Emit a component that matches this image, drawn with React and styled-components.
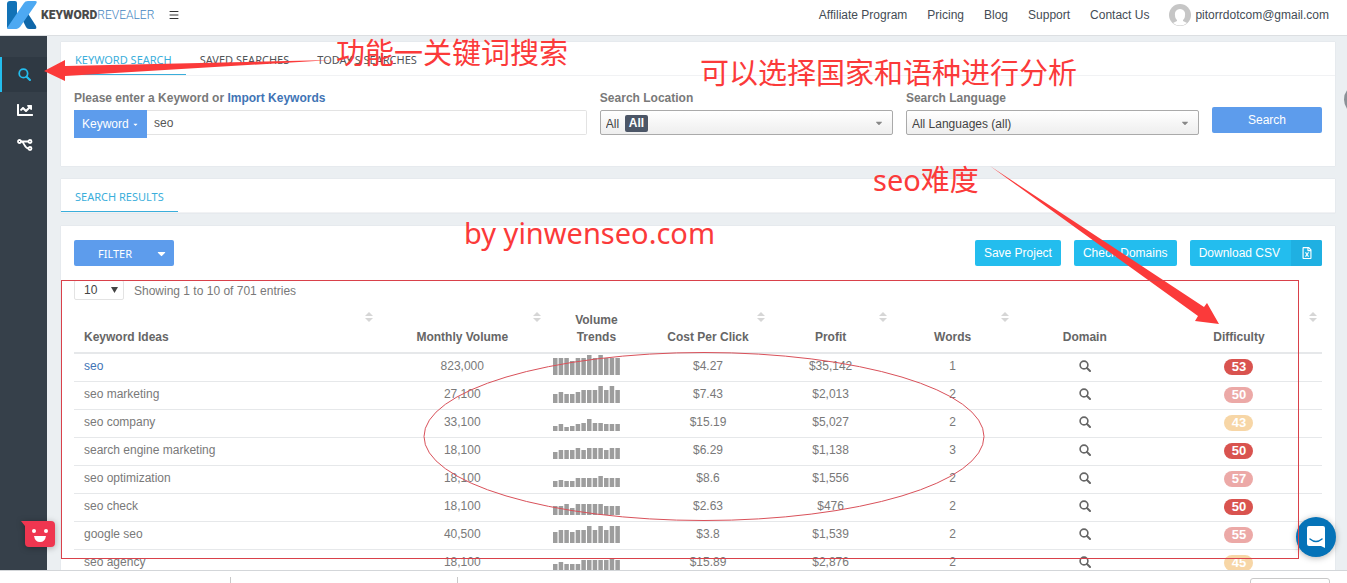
import React from 'react';
import styled, { createGlobalStyle } from 'styled-components';
import { Menu } from 'lucide-react';
import { FaCaretDown, FaChartLine, FaRegFileExcel } from 'react-icons/fa';

const COLORS = {
  blue: '#5d9cec',
  cyan: '#23bdee',
  tab: '#3aaedb',
  link: '#3f74b5',
  text: '#797979',
  dark: '#36404a',
  page: '#ebeff2',
  line: '#e6e8ea',
  mark: '#fb3a3a',
};

const KEYWORDS = [
  { name: 'seo', volume: '823,000', cpc: '$4.27', profit: '$35,142', words: 1, difficulty: 53, tone: '#d9534f', trend: [17, 17, 17, 14, 17, 17, 20, 17, 20, 17, 17, 17] },
  { name: 'seo marketing', volume: '27,100', cpc: '$7.43', profit: '$2,013', words: 2, difficulty: 50, tone: '#eca9a7', trend: [9, 11, 9, 9, 11, 13, 13, 13, 17, 13, 17, 13] },
  { name: 'seo company', volume: '33,100', cpc: '$15.19', profit: '$5,027', words: 2, difficulty: 43, tone: '#f7d6a6', trend: [5, 7, 4, 5, 7, 8, 12, 8, 8, 7, 7, 7] },
  { name: 'search engine marketing', volume: '18,100', cpc: '$6.29', profit: '$1,138', words: 3, difficulty: 50, tone: '#d9534f', trend: [7, 9, 9, 9, 11, 9, 11, 11, 11, 9, 11, 11] },
  { name: 'seo optimization', volume: '18,100', cpc: '$8.6', profit: '$1,556', words: 2, difficulty: 57, tone: '#eca9a7', trend: [6, 7, 6, 6, 9, 9, 9, 9, 11, 9, 9, 9] },
  { name: 'seo check', volume: '18,100', cpc: '$2.63', profit: '$476', words: 2, difficulty: 50, tone: '#d9534f', trend: [9, 9, 11, 7, 11, 11, 11, 11, 11, 9, 9, 9] },
  { name: 'google seo', volume: '40,500', cpc: '$3.8', profit: '$1,539', words: 2, difficulty: 55, tone: '#eca9a7', trend: [11, 13, 13, 11, 13, 13, 17, 13, 17, 13, 17, 17] },
  { name: 'seo agency', volume: '18,100', cpc: '$15.89', profit: '$2,876', words: 2, difficulty: 45, tone: '#f7d6a6', trend: [7, 9, 7, 7, 7, 11, 11, 11, 11, 11, 13, 11] },
];

const COLUMNS = [
  { label: 'Keyword Ideas', width: 304, sortable: true, left: true },
  { label: 'Monthly Volume', width: 168, sortable: true },
  { label: 'Volume Trends', width: 100 },
  { label: 'Cost Per Click', width: 123, sortable: true },
  { label: 'Profit', width: 122, sortable: true },
  { label: 'Words', width: 122, sortable: true },
  { label: 'Domain', width: 142 },
  { label: 'Difficulty', width: 166, sortable: true },
];

const GlobalStyle = createGlobalStyle`
  * {
    box-sizing: border-box;
  }
  body {
    margin: 0;
    color: ${COLORS.text};
    font: 12px/17px 'Liberation Sans', Arial, sans-serif;
  }
  button, input, select {
    margin: 0;
    font: inherit;
  }
  a {
    color: inherit;
    text-decoration: none;
  }
`;

const Shell = styled.div`
  position: relative;
  display: flex;
  flex-direction: column;
  height: 100vh;
  overflow: hidden;
  background: #fff;
`;

const TopBar = styled.header`
  display: flex;
  flex: none;
  align-items: center;
  height: 36px;
  padding: 0 18px 5px 7px;
  border-bottom: 1px solid #dcdfe2;
`;

const Brand = styled.a`
  display: flex;
  align-items: center;
  gap: 4px;
  color: #4586bf;
  font: 300 12px/16px Roboto, sans-serif;
  b {
    color: #4a4a4a;
    font-weight: 900;
  }
`;

const IconButton = styled.button`
  display: flex;
  margin-left: 14px;
  padding: 0;
  border: 0;
  background: none;
  color: #333;
`;

const TopNav = styled.nav`
  display: flex;
  align-items: center;
  gap: 20px;
  margin-left: auto;
  color: #444c55;
`;

const Account = styled.a`
  display: flex;
  align-items: center;
  gap: 4px;
`;

const Body = styled.div`
  display: flex;
  flex: 1;
  min-height: 0;
  overflow: hidden;
  background: ${COLORS.page};
`;

const Sidebar = styled.nav`
  flex: none;
  width: 47px;
  padding-top: 21px;
  background: ${COLORS.dark};
`;

const SideLink = styled.a`
  display: flex;
  align-items: center;
  justify-content: center;
  height: 35px;
  border-left: 2px solid ${props => (props.$active ? COLORS.cyan : 'transparent')};
  background: ${props => (props.$active ? '#2f3943' : 'none')};
  color: ${props => (props.$active ? COLORS.cyan : '#fff')};
`;

const Content = styled.main`
  display: flex;
  flex: 1;
  flex-direction: column;
  gap: 13px;
  min-width: 0;
  padding: 6px 12px 0 14px;
`;

const Panel = styled.section`
  flex: none;
  background: #fff;
  box-shadow: 0 0 1px #cdd3d8;
`;

const TabList = styled.div`
  display: flex;
  height: 34px;
  border-bottom: 1px solid #f1f2f4;
`;

const Tab = styled.button`
  padding: 3px 14px 0;
  border: 0;
  border-bottom: 1px solid ${props => (props.$active ? COLORS.tab : 'transparent')};
  background: none;
  color: ${props => (props.$active ? COLORS.tab : '#505458')};
  font: 400 11px/17px 'Noto Sans', sans-serif;
`;

const SearchForm = styled.form`
  display: grid;
  grid-template-columns: 7fr 4fr 4fr 110px;
  gap: 13px;
  padding: 14px 13px 28px;
`;

const Field = styled.div`
  min-width: 0;
`;

const FieldLabel = styled.label`
  display: block;
  margin-bottom: 3px;
  font-weight: 700;
  a {
    color: ${COLORS.link};
  }
`;

const InputGroup = styled.div`
  display: flex;
  align-items: flex-start;
`;

const KeywordButton = styled.button`
  width: 73px;
  height: 28px;
  padding: 0;
  border: 0;
  background: ${COLORS.blue};
  color: #fff;
`;

const KeywordInput = styled.input`
  flex: 1;
  min-width: 0;
  height: 25px;
  padding: 0 7px;
  border: 1px solid #e3e3e3;
  border-left: 0;
  border-radius: 0 2px 2px 0;
  color: #565656;
`;

const SelectBox = styled.div`
  position: relative;
  > svg {
    position: absolute;
    top: 8px;
    right: 9px;
    pointer-events: none;
    color: #888;
  }
`;

const Select = styled.select`
  appearance: none;
  width: 100%;
  height: 25px;
  padding: 3px 5px 0;
  border: 1px solid #aaa;
  border-radius: 2px;
  background: linear-gradient(#fff, #eee);
  color: #444;
`;

const RegionBadge = styled.span`
  position: absolute;
  top: 5px;
  left: 25px;
  padding: 0 4px;
  border-radius: 2px;
  pointer-events: none;
  background: #4c5667;
  color: #fff;
  font-weight: 700;
`;

const Button = styled.button`
  display: flex;
  align-items: center;
  justify-content: center;
  height: 26px;
  padding: 0 9px;
  border: 0;
  border-radius: 2px;
  background: ${props => props.$color};
  color: #fff;
`;

const SubmitButton = styled(Button)`
  width: 100%;
  margin-top: 17px;
`;

const FilterButton = styled(Button)`
  justify-content: space-between;
  width: 100px;
  padding: 0 6px 0 24px;
  font: 400 11px/17px 'Noto Sans', sans-serif;
`;

const DownloadButton = styled(Button)`
  gap: 11px;
  padding-right: 0;
  overflow: hidden;
  span {
    display: flex;
    align-items: center;
    justify-content: center;
    width: 31px;
    height: 26px;
    background: #1fb0e2;
  }
`;

const Toolbar = styled.div`
  display: flex;
  gap: 13px;
`;

const Spacer = styled.div`
  flex: 1;
`;

const Results = styled(Panel)`
  padding: 14px 13px 0;
`;

const Entries = styled.div`
  display: flex;
  align-items: flex-end;
  gap: 10px;
  margin-top: 14px;
`;

const PageSize = styled.div`
  position: relative;
  width: 50px;
  select {
    display: block;
    height: 20px;
    padding: 1px 9px 0;
    border-color: #e3e3e3;
    background: #fff;
  }
  svg {
    position: absolute;
    top: 7px;
    right: 6px;
    pointer-events: none;
  }
`;

const Table = styled.table`
  width: 100%;
  table-layout: fixed;
  border-collapse: separate;
  border-spacing: 0;
`;

const HeadCell = styled.th`
  position: relative;
  height: 54px;
  padding: 0 10px 6px;
  border-bottom: 2px solid ${COLORS.line};
  color: #666;
  text-align: ${props => (props.$left ? 'left' : 'center')};
  vertical-align: bottom;
  > svg {
    position: absolute;
    top: 12px;
    right: 5px;
  }
`;

const HeadText = styled.span`
  display: inline-block;
  max-width: ${props => (props.$narrow ? '50px' : 'none')};
`;

const Cell = styled.td`
  height: 28px;
  padding: 4px 10px 0;
  border-bottom: 1px solid ${COLORS.line};
  text-align: ${props => (props.$left ? 'left' : 'center')};
  vertical-align: top;
  a {
    color: ${COLORS.link};
  }
`;

const TrendCell = styled(Cell)`
  padding: 1px 7px 0;
  text-align: left;
  svg {
    display: block;
  }
`;

const DomainButton = styled.button`
  display: inline-flex;
  padding: 2px;
  border: 0;
  background: none;
  color: #666;
  vertical-align: top;
`;

const Badge = styled.span`
  display: block;
  width: 29px;
  margin: 1px auto 0;
  border-radius: 8px;
  background: ${props => props.$tone};
  color: #fff;
  font-size: 13px;
  font-weight: 700;
  line-height: 16px;
`;

const BottomBar = styled.footer`
  display: flex;
  flex: none;
  height: 13px;
  padding-right: 17px;
  border-top: 1px solid #d3d6d9;
  background: #fff;
`;

const BottomItem = styled.div`
  width: ${props => props.$width};
  height: 7px;
  margin-top: 6px;
  border-right: 1px solid #c9c9c9;
`;

const BottomButton = styled.button`
  width: 80px;
  height: 20px;
  margin: 7px 0 0 auto;
  border: 1px solid #c9c9c9;
  border-radius: 3px;
  background: #fff;
`;

const Floating = styled.button`
  position: absolute;
  right: ${props => props.$right};
  bottom: ${props => props.$bottom};
  left: ${props => props.$left};
  padding: 0;
  border: 0;
  background: none;
  filter: drop-shadow(0 1px 3px rgba(0, 0, 0, 0.3));
  svg {
    display: block;
  }
`;

const EdgeHandle = styled.div`
  position: absolute;
  top: 84px;
  right: -28px;
  width: 31px;
  height: 31px;
  border-radius: 50%;
  background: #8b9197;
`;

const Markup = styled.div`
  position: absolute;
  inset: 0;
  overflow: hidden;
  pointer-events: none;
  svg {
    display: block;
    width: 100%;
    height: 100%;
  }
`;

const Note = styled.span`
  position: absolute;
  top: ${props => props.$top}px;
  left: ${props => props.$left}px;
  color: ${COLORS.mark};
  font: 29px/40px 'Noto Sans', 'Noto Sans CJK SC', sans-serif;
  white-space: nowrap;
`;

const LogoMark = () => (
  <svg width="30" height="28" viewBox="0 0 30 28" aria-hidden="true">
    <path d="M3 0h5q2 0 2 2v24q0 2-2 2H2q-2 0-2-2V3q0-3 3-3z" fill="#1272b6" />
    <path d="M13 14l7-3 9 14q1 3-1 3h-6q-2 0-3-2z" fill="#0f67a9" />
    <path d="M21 0h7q3 0 1 3L13 26q-2 2-4 2H1l-1-1L17 2q1-2 4-2z" fill="#4da9f2" />
  </svg>
);

const Avatar = () => (
  <svg width="22" height="22" viewBox="0 0 22 22" aria-hidden="true">
    <circle cx="11" cy="11" r="11" fill="#c6c6c6" />
    <path d="M11 5a5 5 0 0 1 5 6c0 3-1 4-2 5v1l4 2a11 11 0 0 1-14 0l4-2v-1c-1-1-2-2-2-5a5 5 0 0 1 5-6z" fill="#fff" />
  </svg>
);

const SearchIcon = ({ size }) => (
  <svg width={size} height={size} viewBox="0 0 12 12" fill="none" stroke="currentColor" aria-hidden="true">
    <circle cx="5" cy="5" r="3.900" strokeWidth="1.600" />
    <path d="M8 8l3 3" strokeWidth="2" strokeLinecap="round" />
  </svg>
);

const BranchIcon = () => (
  <svg width="16" height="12" viewBox="0 0 16 12" fill="none" stroke="currentColor" strokeWidth="1.800" aria-hidden="true">
    <path d="M4 2.500H12M5 3c3 1 2 6.500 7 6.500" />
    <circle cx="2.500" cy="2.500" r="1.500" />
    <circle cx="13" cy="2.500" r="1.500" />
    <circle cx="13" cy="9.500" r="1.500" />
  </svg>
);

const SortIcon = () => (
  <svg width="8" height="10" viewBox="0 0 8 10" fill="#d6d6d6" aria-hidden="true">
    <path d="M4 0l4 4H0zM4 10L0 6h8z" />
  </svg>
);

const Triangle = () => (
  <svg width="7" height="6" viewBox="0 0 7 6" fill="#444" aria-hidden="true">
    <path d="M0 0h7L3.500 6z" />
  </svg>
);

/** Twelve months of search volume */
const Sparkline = ({ values }) => (
  <svg width="68" height="20" viewBox="0 0 68 20" aria-hidden="true">
    {values.map((v, i) => (
      <rect key={i} x={i * 5.67} y={20 - v} width="4.500" height={v} fill="#9d9d9d" />
    ))}
  </svg>
);

const Header = () => (
  <TopBar>
    <Brand href="#">
      <LogoMark />
      <span>
        <b>KEYWORD</b>REVEALER
      </span>
    </Brand>
    <IconButton aria-label="Menu">
      <Menu size={12} />
    </IconButton>
    <TopNav>
      <a href="#">Affiliate Program</a>
      <a href="#">Pricing</a>
      <a href="#">Blog</a>
      <a href="#">Support</a>
      <a href="#">Contact Us</a>
      <Account href="#">
        <Avatar />
        pitorrdotcom@gmail.com
      </Account>
    </TopNav>
  </TopBar>
);

const SearchPanel = () => (
  <Panel>
    <TabList>
      <Tab $active>KEYWORD SEARCH</Tab>
      <Tab>SAVED SEARCHES</Tab>
      <Tab>TODAY'S SEARCHES</Tab>
    </TabList>
    <SearchForm onSubmit={e => e.preventDefault()}>
      <Field>
        <FieldLabel htmlFor="keyword">
          Please enter a Keyword or <a href="#">Import Keywords</a>
        </FieldLabel>
        <InputGroup>
          <KeywordButton type="button">
            Keyword <FaCaretDown size={7} />
          </KeywordButton>
          <KeywordInput id="keyword" defaultValue="seo" />
        </InputGroup>
      </Field>
      <Field>
        <FieldLabel htmlFor="location">Search Location</FieldLabel>
        <SelectBox>
          <Select id="location">
            <option>All</option>
          </Select>
          <RegionBadge>All</RegionBadge>
          <FaCaretDown size={10} />
        </SelectBox>
      </Field>
      <Field>
        <FieldLabel htmlFor="language">Search Language</FieldLabel>
        <SelectBox>
          <Select id="language">
            <option>All Languages (all)</option>
          </Select>
          <FaCaretDown size={10} />
        </SelectBox>
      </Field>
      <Field>
        <SubmitButton $color={COLORS.blue}>Search</SubmitButton>
      </Field>
    </SearchForm>
  </Panel>
);

const KeywordTable = () => (
  <Table>
    <colgroup>
      {COLUMNS.map(c => (
        <col key={c.label} width={c.width} />
      ))}
    </colgroup>
    <thead>
      <tr>
        {COLUMNS.map(c => (
          <HeadCell key={c.label} $left={c.left}>
            <HeadText $narrow={c.label === 'Volume Trends'}>{c.label}</HeadText>
            {c.sortable && <SortIcon />}
          </HeadCell>
        ))}
      </tr>
    </thead>
    <tbody>
      {KEYWORDS.map((k, i) => (
        <tr key={k.name}>
          <Cell $left>{i === 0 ? <a href="#">{k.name}</a> : k.name}</Cell>
          <Cell>{k.volume}</Cell>
          <TrendCell>
            <Sparkline values={k.trend} />
          </TrendCell>
          <Cell>{k.cpc}</Cell>
          <Cell>{k.profit}</Cell>
          <Cell>{k.words}</Cell>
          <Cell>
            <DomainButton aria-label="Look up domain">
              <SearchIcon size={12} />
            </DomainButton>
          </Cell>
          <Cell>
            <Badge $tone={k.tone}>{k.difficulty}</Badge>
          </Cell>
        </tr>
      ))}
    </tbody>
  </Table>
);

const Annotations = () => (
  <Markup>
    <svg>
      <path d="M44 71l21-11v6L332 60 65 76v5z" fill={COLORS.mark} />
      <path d="M990 166l214 141 3-4 12 21-24-3 3-5z" fill={COLORS.mark} />
      <rect x="61.500" y="280.500" width="1237" height="278" fill="none" stroke="#d9414a" />
      <ellipse cx="704" cy="436.500" rx="280" ry="84" fill="none" stroke="#d9515a" />
    </svg>
    <Note $top={33} $left={336}>功能一关键词搜索</Note>
    <Note $top={53} $left={700}>可以选择国家和语种进行分析</Note>
    <Note $top={160} $left={873}>seo难度</Note>
    <Note $top={213} $left={464}>by yinwenseo.com</Note>
  </Markup>
);

const App = () => (
  <Shell>
    <GlobalStyle />
    <Header />
    <Body>
      <Sidebar>
        <SideLink href="#" $active aria-label="Keyword search">
          <SearchIcon size={13} />
        </SideLink>
        <SideLink href="#" aria-label="Rank tracker">
          <FaChartLine size={16} />
        </SideLink>
        <SideLink href="#" aria-label="Brainstorm">
          <BranchIcon />
        </SideLink>
      </Sidebar>
      <Content>
        <SearchPanel />
        <Panel>
          <TabList>
            <Tab $active>SEARCH RESULTS</Tab>
          </TabList>
        </Panel>
        <Results>
          <Toolbar>
            <FilterButton $color={COLORS.blue}>
              FILTER <FaCaretDown size={13} />
            </FilterButton>
            <Spacer />
            <Button $color={COLORS.cyan}>Save Project</Button>
            <Button $color={COLORS.cyan}>Check Domains</Button>
            <DownloadButton $color={COLORS.cyan}>
              Download CSV
              <span>
                <FaRegFileExcel size={12} />
              </span>
            </DownloadButton>
          </Toolbar>
          <Entries>
            <PageSize>
              <Select aria-label="Entries per page">
                <option>10</option>
              </Select>
              <Triangle />
            </PageSize>
            Showing 1 to 10 of 701 entries
          </Entries>
          <KeywordTable />
        </Results>
      </Content>
    </Body>
    <BottomBar>
      <BottomItem $width="231px" />
      <BottomItem $width="227px" />
      <BottomButton aria-label="Show all" />
    </BottomBar>
    <EdgeHandle />
    <Floating $left="21px" $bottom="35px" aria-label="Feedback">
      <svg width="34" height="27" viewBox="0 0 34 27">
        <path d="M0 0h30q4 0 4 4v18q0 4-4 4H8q-4 0-4-4V5z" fill="#ef3650" />
        <circle cx="13" cy="10" r="2" fill="#fff" />
        <circle cx="25" cy="10" r="2" fill="#fff" />
        <path d="M13 15h12q-1 6-6 6t-6-6z" fill="#fff" />
      </svg>
    </Floating>
    <Floating $right="11px" $bottom="26px" aria-label="Open chat">
      <svg width="40" height="40" viewBox="0 0 40 40">
        <circle cx="20" cy="20" r="20" fill="#0573b8" />
        <path d="M13 9h14q2 0 2 2v20l-4-2H13q-2 0-2-2V11q0-2 2-2z" fill="#fff" />
        <path d="M14 22q6 5 12 0" fill="none" stroke="#0573b8" strokeWidth="1.500" strokeLinecap="round" />
      </svg>
    </Floating>
    <Annotations />
  </Shell>
);

export default App;
